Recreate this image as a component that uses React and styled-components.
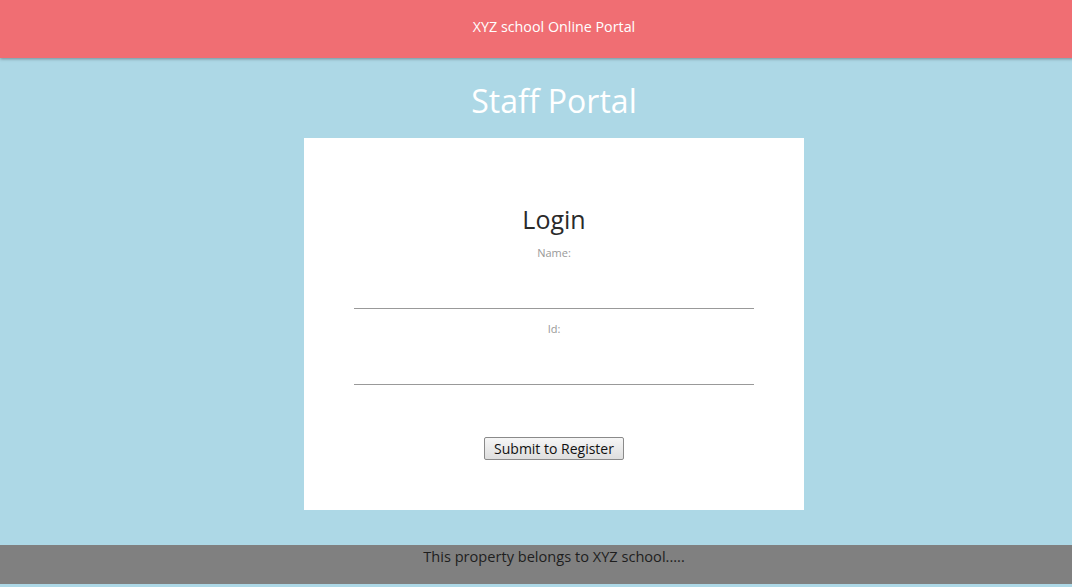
import styled, { createGlobalStyle } from "styled-components";

const GlobalStyle = createGlobalStyle`
  html, body {
    margin: 0;
    padding: 0;
    overflow: hidden;
    background: #add8e6;
  }
  body {
    font-family: "Open Sans", "Noto Sans", sans-serif;
  }
`;

const Page = styled.div`
  width: 1108px;
  min-height: 587px;
  display: flex;
  flex-direction: column;
  align-items: center;
  background: #add8e6;
`;

const Header = styled.header`
  align-self: stretch;
  height: 58px;
  background: #f06e73;
  box-shadow: 0 1px 3px rgba(0, 0, 0, 0.35);
  display: flex;
  align-items: center;
  justify-content: center;
  color: #fff;
  font-size: 14.3px;
  padding-bottom: 5px;
  box-sizing: border-box;
`;

const Title = styled.h1`
  margin: 23px 0 17px;
  font-size: 32px;
  line-height: 40px;
  font-weight: 400;
  color: #fff;
`;

const Card = styled.form`
  width: 500px;
  height: 372px;
  box-sizing: border-box;
  background: #fff;
  padding-top: 66px;
  display: flex;
  flex-direction: column;
  align-items: center;
`;

const CardTitle = styled.h2`
  margin: 0 0 12px;
  font-size: 25px;
  line-height: 30px;
  font-weight: 400;
  color: #2a2a2a;
`;

const Label = styled.label`
  font-size: 11px;
  line-height: 14px;
  color: #999;
`;

const Input = styled.input`
  width: 400px;
  height: 49px;
  box-sizing: border-box;
  border: none;
  border-bottom: 1px solid #999;
  outline: none;
  margin-bottom: ${(p) => p.$gap}px;
  background: transparent;
`;

const Button = styled.button`
  height: 23px;
  padding: 0 9px;
  font-family: "Open Sans", "Noto Sans", sans-serif;
  font-size: 14px;
  line-height: 19px;
  color: #111;
  background: linear-gradient(#f6f6f6, #dedede);
  border: 1px solid #8a8a8a;
  border-radius: 2px;
`;

const Footer = styled.footer`
  align-self: stretch;
  margin-top: 35px;
  height: 39px;
  background: #808080;
  color: #1e1e1e;
  font-size: 14.6px;
  line-height: 22px;
  text-align: center;
`;

export default function App() {
  return (
    <>
      <GlobalStyle />
      <Page>
        <Header>XYZ school Online Portal</Header>
        <Title>Staff Portal</Title>
        <Card>
          <CardTitle>Login</CardTitle>
          <Label>Name:</Label>
          <Input $gap={13} />
          <Label>Id:</Label>
          <Input $gap={52} />
          <Button type="button">Submit to Register</Button>
        </Card>
        <Footer>This property belongs to XYZ school.....</Footer>
      </Page>
    </>
  );
}
